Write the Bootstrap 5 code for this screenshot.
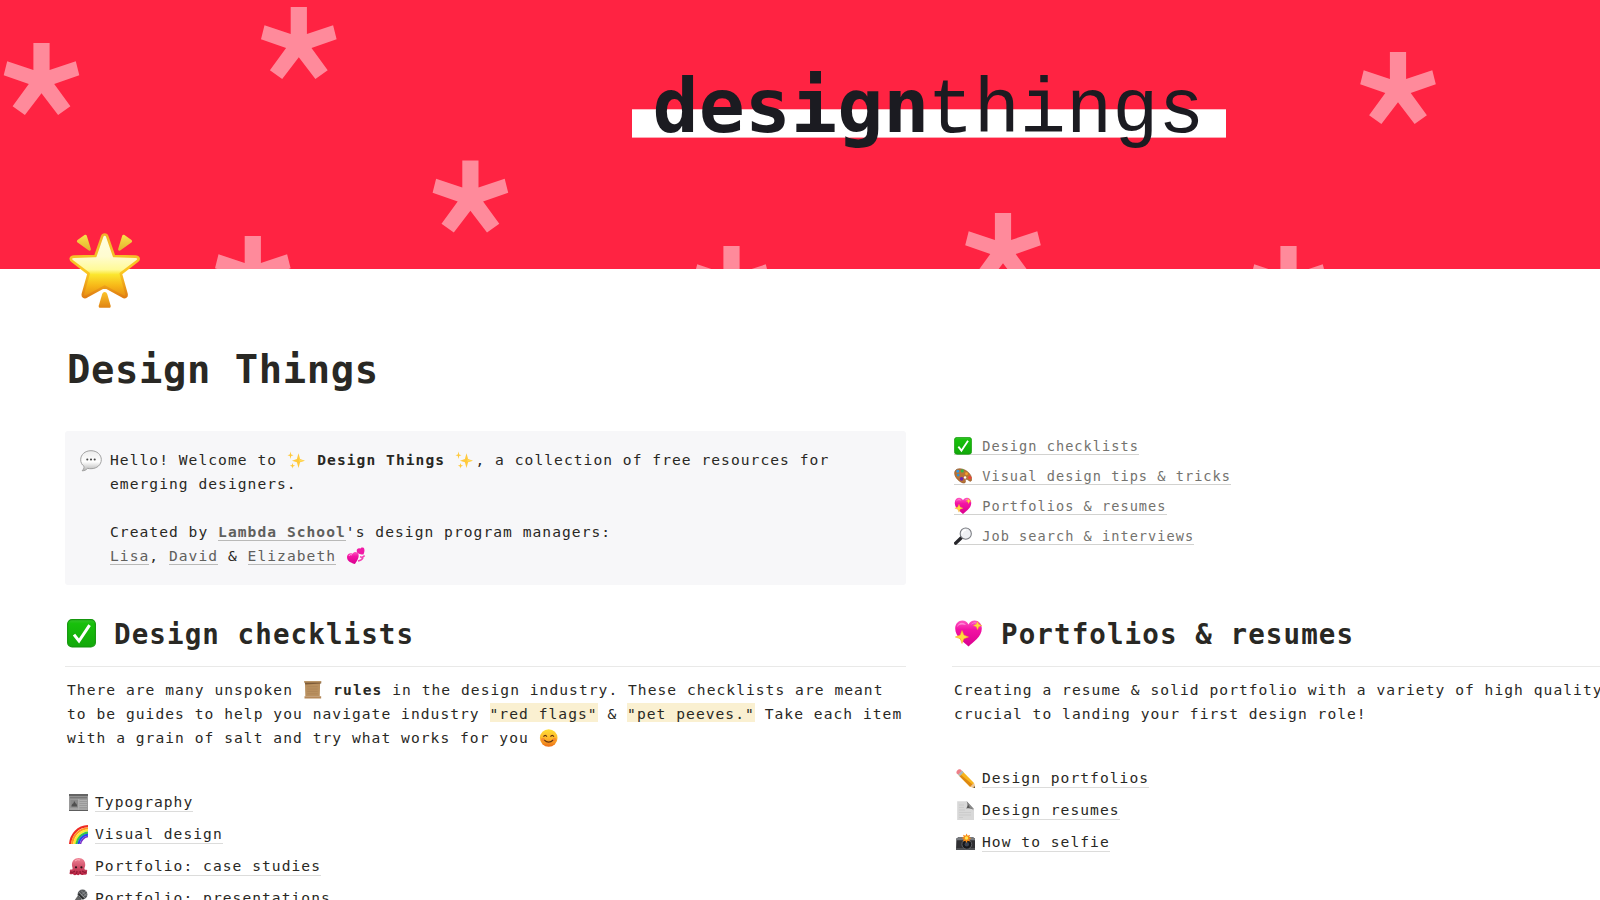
<!DOCTYPE html>
<html lang="en">
<head>
<meta charset="utf-8">
<meta name="viewport" content="width=device-width, initial-scale=1">
<title>Design Things</title>
<link href="https://cdn.jsdelivr.net/npm/bootstrap@5.3.0/dist/css/bootstrap.min.css" rel="stylesheet">
<style>
html,body{height:900px;overflow:hidden}
body{font-family:"DejaVu Sans Mono",monospace;font-size:14.6px;letter-spacing:1.04px;line-height:24px;color:#292824;background:#fff}
.cover{height:269px;background:#ff2342}
.page-icon{left:67px;top:229px}
.page-body{padding-left:65px;width:1793px}
h1{font-size:38.8px;line-height:46px;letter-spacing:.62px;margin:78px 0 38px 2px;font-weight:700}
.cols{gap:46px}
.pane{width:841px;flex:none}
.callout{background:#f7f7f9;border-radius:3px;padding:17px 16px 17px 15px;height:154px}
.callout .lead-icon{width:22px;height:22px;margin:2px 8px 0 0;flex:none}
.callout a{color:#60605d;text-decoration:none;border-bottom:1px solid #b9b9b8}
.toc a{color:#73726e;text-decoration:none;border-bottom:1px solid #d2d2d0}
.toc{font-size:13.6px;letter-spacing:1.03px;line-height:30px;padding-left:2px}
.toc .emo{width:18px;margin-right:1px}
.sect{margin-top:31px;padding:0 0 14px 2px;border-bottom:1px solid #e9e9e8}
h2{font-size:27.5px;line-height:36px;letter-spacing:1.1px;font-weight:700;margin:0}
h2 svg{width:29px;height:29px;margin:-2px 18px 0 0;flex:none}
.intro{margin:11px 0 36px 2px;white-space:nowrap}
.hl{background:#faf0d1;padding-top:2px}
.emo{width:20.6px;height:18px;vertical-align:-4px}
.pages{padding-left:4px}
.pages li{height:32px;line-height:32px}
.pages svg{width:19px;height:19px;margin-right:7px;flex:none}
.pages a{color:#292824;text-decoration:none;border-bottom:1px solid #dcdcdb;padding-bottom:1px}
</style>
</head>
<body>
<svg width="0" height="0" class="position-absolute" aria-hidden="true">
<defs>
<linearGradient id="gStar" x1="0" y1="0" x2="0" y2="1"><stop offset="0" stop-color="#fffde0"/><stop offset=".35" stop-color="#fffcd0"/><stop offset=".56" stop-color="#fffa98"/><stop offset=".64" stop-color="#fbe62e"/><stop offset=".82" stop-color="#f7b718"/><stop offset="1" stop-color="#e58a13"/></linearGradient>
<linearGradient id="gEdge" x1="0" y1="0" x2="0" y2="1"><stop offset="0" stop-color="#efb42a"/><stop offset=".6" stop-color="#fbc823"/><stop offset="1" stop-color="#e07d12"/></linearGradient>
<linearGradient id="gRay" x1="0" y1="0" x2="0" y2="1"><stop offset="0" stop-color="#fbe34a"/><stop offset="1" stop-color="#e2b22d"/></linearGradient>
<linearGradient id="gTail" x1="0" y1="0" x2="0" y2="1"><stop offset="0" stop-color="#fcc52a"/><stop offset="1" stop-color="#e08312"/></linearGradient>
<linearGradient id="gGreen" x1="0" y1="0" x2="0" y2="1"><stop offset="0" stop-color="#35c22a"/><stop offset=".15" stop-color="#18c00b"/><stop offset="1" stop-color="#12a80a"/></linearGradient>
<linearGradient id="gPink" x1="0" y1="0" x2="0" y2="1"><stop offset="0" stop-color="#ff55c0"/><stop offset=".35" stop-color="#f313a4"/><stop offset="1" stop-color="#d9008f"/></linearGradient>
<linearGradient id="gBubble" x1="0" y1="0" x2="0" y2="1"><stop offset="0" stop-color="#ececec"/><stop offset=".55" stop-color="#fff"/><stop offset="1" stop-color="#b4b4b4"/></linearGradient>
<linearGradient id="gFace" x1="0" y1="0" x2="0" y2="1"><stop offset="0" stop-color="#ffdf35"/><stop offset=".55" stop-color="#fdb52b"/><stop offset="1" stop-color="#ec6b14"/></linearGradient>
<linearGradient id="gOcto" x1="0" y1="0" x2="0" y2="1"><stop offset="0" stop-color="#ef8496"/><stop offset="1" stop-color="#b51f3f"/></linearGradient>
<symbol id="check" viewBox="0 0 29 29"><rect x=".6" y=".6" width="27.8" height="27.3" rx="4.5" fill="url(#gGreen)" stroke="#15960e" stroke-width="1.1"/><path d="M7 15.6 12 22 22.6 6.2" fill="none" stroke="#fff" stroke-width="3"/></symbol>
<symbol id="heart" viewBox="0 0 29 29"><path d="M14.5 27.5C10 23 1.2 18 1.2 9.5 1.2 4.5 4.5 1.4 8.3 1.4c2.8 0 5 1.5 6.2 4 1.2-2.500 3.400-4 6.200-4 3.800 0 7.100 3.100 7.100 8.100 0 8.500-8.800 13.500-13.300 18z" fill="url(#gPink)"/><path d="M3 8c1-4 6-6 9-2-4-1-7-1-9 2zM17 6c2-4 6-3 7-1-3-1-5-1-7 1z" fill="#ffa4df" opacity=".7"/><path d="m8 11.500 1.900 4.600 4.600 1.900-4.600 1.700L8 24.500l-1.800-4.800L1.300 18l4.900-1.900zM23.500 2.500l1.200 2.800 3 1.200-3 1.200-1.200 3-1.200-3-2.900-1.200 2.900-1.200z" fill="#ffdc3e" stroke="#f5a623" stroke-width=".5"/></symbol>
<symbol id="sparkles" viewBox="0 0 20.6 18"><path d="M11.500 2.200 13.100 8 18 9.700 13.100 11.300 11.500 17 9.900 11.300 5 9.700 9.900 8zM3.500.5l.7 3 2.300.8-2.300.8-.7 3-.7-3L.5 4.300l2.300-.8zM5.500 12l.6 2 2 .8-2 .7-.6 2-.6-2-2-.7 2-.8z" fill="#ffc93c"/><path d="m11.500 4 1 4.500L17 9.700l-4.500 1" fill="#ffdb5c"/></symbol>
<symbol id="bubble" viewBox="0 0 22 22"><path d="M11 .7C5 .7.7 4.600.7 9.700c0 3 1.200 5 3.300 6.600.3 1.900-.8 3.500-1.900 4.500 2.600 0 4.400-1 5.500-2.500 1 .3 2.200.4 3.400.4 6 0 10.300-4 10.300-9S17 .7 11 .7z" fill="url(#gBubble)" stroke="#a0a0a0" stroke-width="1"/><circle cx="7.300" cy="9.500" r="1.050" fill="#444"/><circle cx="11" cy="9.500" r="1.050" fill="#444"/><circle cx="14.700" cy="9.500" r="1.050" fill="#444"/></symbol>
<symbol id="hearts" viewBox="0 0 20.600 18"><path d="M9 17C6 16.200.8 14.500 1 10c.1-3 3-4.600 5.500-3.300C8 4.400 12 4.500 12.600 7.600 13.200 11.300 10.500 15 9 17z" fill="url(#gPink)"/><path d="M17.500 7.500C15 7.700 11 7 10.700 4c-.1-2.200 2-3.200 3.500-2.300C15 .2 17.800 0 18.300 2c.5 2-.2 4-.8 5.500z" fill="#f01aa6"/><path d="M14 9.800c1.600.6 3.600.2 4.600-1.300M12 14c2.500-.3 4.300-1.600 5-3.200" fill="none" stroke="#f63fb4" stroke-width="1.500"/><path d="M3 9c.6-1.500 2-1.600 3-1" stroke="#ffa4df" fill="none"/></symbol>
<symbol id="palette" viewBox="0 0 19 18"><path d="M1 4C3-.5 11 1 15.500 5.500c4 4 4 9.500 1.500 9-2-.5-2.500-2.500-4.500-2-1.500.5.500 2.700-1 3.700C8.500 18-1.500 10 1 4z" fill="#b87436" stroke="#8b4e1f" stroke-width=".6"/><circle cx="4" cy="4" r="1.500" fill="#2e9bea"/><circle cx="8.700" cy="3.700" r="1.700" fill="#35b64a"/><circle cx="4.400" cy="8" r="1.500" fill="#2a90d8"/><circle cx="8" cy="12" r="2" fill="#6b22b0"/><circle cx="13.200" cy="6.600" r="1.500" fill="#f5a22a"/><circle cx="16.600" cy="10.600" r="1.700" fill="#ee4438"/><circle cx="11.700" cy="10.600" r="1.300" fill="#fff"/></symbol>
<symbol id="lens" viewBox="0 0 19 18"><path d="m8 10.500-6.200 6" stroke="#26262b" stroke-width="3.600" stroke-linecap="round"/><circle cx="12.400" cy="6.500" r="5.900" fill="#eef0f3" stroke="#77797f" stroke-width="1.100"/><path d="M8.700 6.500a3.800 3.800 0 0 1 4-3.900" stroke="#fff" fill="none" stroke-width="1.500"/></symbol>
<symbol id="scroll" viewBox="0 0 20.600 19"><path d="M1.500 2h16l-.4 14H1.900z" fill="#b9905f"/><path d="M.6.300h18v2.400L2 3.600z" fill="#7d5b38"/><path d="M.6.300h18v1.200H.6z" fill="#c59c69"/><path d="M1 16.200h17.600v2.300H1z" fill="#b58858"/><path d="M4 6h11M4 8.500h11M4 11h11M4 13.500h11" stroke="#a67e50" stroke-width=".5"/></symbol>
<symbol id="smile" viewBox="0 0 20.600 18"><circle cx="9.700" cy="9" r="8.800" fill="url(#gFace)"/><path d="M4.500 7.700q1.700-2.500 3.400 0M11.500 7.700q1.700-2.500 3.400 0" fill="none" stroke="#643411" stroke-width="1.200"/><path d="M5.200 11q4.500 4.300 9 0" fill="none" stroke="#643411" stroke-width="1.200"/><circle cx="3.900" cy="10.500" r="1.800" fill="#f56a35" opacity=".5"/><circle cx="15.500" cy="10.500" r="1.800" fill="#f56a35" opacity=".5"/></symbol>
<symbol id="news" viewBox="0 0 19 19"><path d="M0 1h19v17H0z" fill="#999"/><path d="M0 1h19v2H0z" fill="#646464"/><path d="M1 3.800h17v1.600H1z" fill="#777"/><path d="M1.500 7h7.500v7.500H1.500z" fill="#8a8a8a"/><path d="M2.500 13.500c0-2 1-3 2.300-3.500-1-2 2-2 1.300 0 1.500.5 2 1.500 2 3.500z" fill="#505050"/><path d="M10.500 7.500H18M10.500 9.500H18M10.500 11.500H18M10.500 13.500H18M1 16h8M10.500 16H18" stroke="#b4b4b4" stroke-width=".8"/><path d="M9.800 6v11" stroke="#c8c8c8" stroke-width=".6"/><path d="M0 17.500h19" stroke="#5d5d5d"/></symbol>
<symbol id="rainbow" viewBox="0 0 19 19"><g fill="none" stroke-width="2.250"><path d="M1.100 19C2 9 9 1.500 19 1.200" stroke="#ee2b24"/><path d="M3.200 19C4 10.500 10.500 3.600 19 3.300" stroke="#ff9822"/><path d="M5.300 19C6 12 12 5.700 19 5.400" stroke="#ffe92e"/><path d="M7.400 19C8 13.500 13 7.800 19 7.500" stroke="#35c84a"/><path d="M9.500 19c.5-4.500 4.500-9 9.500-9.400" stroke="#2249ef"/><path d="M11.500 19c.5-3.500 3.500-7 7.500-7.400" stroke="#7930ca" stroke-width="1.500"/></g></symbol>
<symbol id="octopus" viewBox="0 0 19 19"><path d="M3 8.500C2.500 4 5.500 1 9.700 1s7 3 6.500 7.500c-.2 1.500-1 2.500-.7 3.500.4 1.300 1.800.3 2.500 1 1 1-1 2-.1 3.500.3 1-1.400 1.500-2.900 1-1.500 1-3.300.6-4-.4-.8 1.400-2.400 1.400-3.300.4-1.500 1-3 .8-4-.5-1.500.7-3.500.2-3.200-1 .8-1 .2-2.200.4-3 .6-1 2 .1 2.500-.8C4 11 3.200 10.500 3 8.500z" fill="url(#gOcto)"/><path d="M1 15q3 1 5-1M18 15q-3 1-5-1M7 17q1-1 1-3M12 17q-1-1-1-3" fill="none" stroke="#811029" stroke-width=".9"/><circle cx="7" cy="10.300" r="1.100" fill="#2b151b"/><circle cx="12.400" cy="10.300" r="1.100" fill="#2b151b"/><path d="M6 4q2-2 5-1" stroke="#ffb0ba" fill="none"/></symbol>
<symbol id="mic" viewBox="0 0 19 19"><path d="m10 5 4 4-9 8-3 2-1-1 2-3z" fill="#666"/><circle cx="13.500" cy="5.500" r="4.900" fill="#55585b"/><path d="m10 3 6 6M12 1.500l5.500 5.500M9.500 6l4.500 4.500M10 8l7-6M12 9.500l6-5" stroke="#a4a7aa" stroke-width=".6"/><path d="m9.500 5 5 5" stroke="#222" stroke-width="1.300"/></symbol>
<symbol id="pencil" viewBox="0 0 19 19"><path d="M2.200 5.700 6 1.700 18 14l1 5-5-1.300z" fill="#f8b51c"/><path d="m3.500 7.200 1.300-1.400L17 16l-1 2-2-.3z" fill="#de8811"/><path d="M14 17.700 18 14l1 5z" fill="#ecc596"/><path d="m17.300 18.500 1.300-1.300.4 1.800z" fill="#2d2824"/><path d="M.5 4.300C0 2 2 0 4.300.3L6 1.700 2.200 5.700z" fill="#ee7f88"/><path d="m2.200 5.700 3.800-4 1.700 1.600-3.900 4z" fill="#a9b5c0"/></symbol>
<symbol id="doc" viewBox="0 0 19 19"><path d="M1.200.300h9.500L18 8v11H1.200z" fill="#d8d8d8"/><path d="M10.700.300c1.700 3 .8 5.500-.5 7.200 3-.8 6-.3 7.800 2z" fill="#555"/><path d="M10.700.3 18 8l-4-.8z" fill="#888"/><path d="M3 4h5M3 6.500h5M3 9h6M3 11.500h12M3 14h12M3 16.500h4" stroke="#c4c4c4" stroke-width=".6"/></symbol>
<symbol id="camera" viewBox="0 0 19 19"><path d="M.4 5.500 3 4h13.500L19 5.500V17H0z" fill="#303033"/><path d="M.4 5.500 3 4h13.500L19 5.500v1.800H.2z" fill="#77797d"/><path d="M0 15h19v2H0z" fill="#505154"/><circle cx="10.800" cy="11.300" r="4.900" fill="#17181b" stroke="#66686c" stroke-width=".9"/><circle cx="10.800" cy="11.300" r="2.200" fill="#3c4351"/><path d="m10.500.500 1.200 2.300 2.500-1-1 2.500 2.200 1-2.200 1 .8 2.300-2.400-.8-1.200 2.200-1-2.300L7 8.400l.8-2.300-2.200-1 2.200-1L7 1.700l2.500 1z" fill="#f98a13"/><circle cx="10.500" cy="5" r="1.700" fill="#ffe650"/></symbol>
<path id="aster" d="M-8.100 0H8.100V27L34.300 18.300 37.800 32.300 12.700 41 28.900 63.300 16.600 72 0 50.300-16.600 72-28.900 63.300-12.700 41-37.800 32.300-34.300 18.300-8.100 27Z" fill="#fff" fill-opacity=".47"/>
</defs>
</svg>

<header class="position-relative">
<svg class="cover d-block" width="1600" height="269" viewBox="0 0 1600 269">
<use href="#aster" x="41.500" y="43"/><use href="#aster" x="298.800" y="7"/><use href="#aster" x="470.400" y="160.500"/><use href="#aster" x="252.800" y="236"/><use href="#aster" x="731.500" y="246"/><use href="#aster" x="1003" y="213"/><use href="#aster" x="1288.500" y="246"/><use href="#aster" x="1398" y="52"/>
<rect x="632" y="109.300" width="594" height="28.300" fill="#fff"/>
<g fill="#1b1b21" letter-spacing="0"><text x="652.500" y="132.300" font-size="75" font-weight="700" textLength="277" lengthAdjust="spacingAndGlyphs" font-family="DejaVu Sans Mono">design</text><text x="927.500" y="132.300" font-size="77" textLength="277" font-family="Liberation Mono">things</text></g>
</svg>
<svg class="page-icon position-absolute" width="76" height="80" viewBox="0 0 76 80">
<path d="M37.700 5.500c1.300 0 2.200.8 2.700 2.300l6.600 19.200 21.300.6c3.600.2 4.400 2.600 1.700 4.700L53.800 44.600l5.600 20c.8 3-1.400 4.500-3.800 2.800L37.700 57.600 19.800 67.400c-2.400 1.700-4.600.2-3.800-2.800l5.600-20L5.400 32.300c-2.700-2.100-1.900-4.500 1.700-4.700l21.300-.6L35 7.800c.5-1.500 1.400-2.300 2.700-2.300z" fill="url(#gStar)" stroke="url(#gEdge)" stroke-width="2.600" stroke-linejoin="round"/>
<path d="M10.500 11 17.500 6c1-.7 2-.3 2.300.8l4 13c.4 1.700-.8 2.300-2 1.600L10.600 13.500c-.9-.6-1-1.700-.1-2.500zM64.500 11 57.500 6c-1-.7-2-.3-2.300.8l-4 13c-.4 1.700.8 2.300 2 1.600L64.400 13.500c.9-.6 1-1.700.1-2.500z" fill="url(#gRay)"/>
<path d="M37.700 63c1.200 0 2 .7 2.500 2l3.400 11.500c.4 1.500-.2 2.300-1.600 2.300h-8.600c-1.400 0-2-.8-1.600-2.300L35.200 65c.5-1.300 1.300-2 2.500-2z" fill="url(#gTail)"/>
</svg>
</header>

<main class="page-body">
<h1>Design Things</h1>
<div class="cols d-flex align-items-start">
<div class="pane callout d-flex">
<svg class="lead-icon"><use href="#bubble"/></svg>
<div>Hello! Welcome to <svg class="emo"><use href="#sparkles"/></svg> <b>Design Things</b> <svg class="emo"><use href="#sparkles"/></svg>, a collection of free resources for<br>emerging designers.<br><br>Created by <a href="#"><b>Lambda School</b></a>'s design program managers:<br><a href="#">Lisa</a>, <a href="#">David</a> &amp; <a href="#">Elizabeth</a> <svg class="emo"><use href="#hearts"/></svg></div>
</div>
<nav class="pane toc">
<div><a href="#"><svg class="emo"><use href="#check" width="18" height="18"/></svg> Design checklists</a></div>
<div><a href="#"><svg class="emo"><use href="#palette" width="18" height="18"/></svg> Visual design tips &amp; tricks</a></div>
<div><a href="#"><svg class="emo"><use href="#heart" width="18" height="18"/></svg> Portfolios &amp; resumes</a></div>
<div><a href="#"><svg class="emo"><use href="#lens" width="18" height="18"/></svg> Job search &amp; interviews</a></div>
</nav>
</div>
<div class="cols d-flex align-items-start">
<section class="pane">
<div class="sect"><h2 class="d-flex align-items-center"><svg><use href="#check"/></svg>Design checklists</h2></div>
<p class="intro">There are many unspoken <svg class="emo"><use href="#scroll"/></svg> <b>rules</b> in the design industry. These checklists are meant<br>to be guides to help you navigate industry <span class="hl">"red flags"</span> &amp; <span class="hl">"pet peeves."</span> Take each item<br>with a grain of salt and try what works for you <svg class="emo"><use href="#smile"/></svg></p>
<ul class="pages list-unstyled mb-0">
<li class="d-flex align-items-center"><svg><use href="#news"/></svg><span><a href="#">Typography</a></span></li>
<li class="d-flex align-items-center"><svg><use href="#rainbow"/></svg><span><a href="#">Visual design</a></span></li>
<li class="d-flex align-items-center"><svg><use href="#octopus"/></svg><span><a href="#">Portfolio: case studies</a></span></li>
<li class="d-flex align-items-center"><svg><use href="#mic"/></svg><span><a href="#">Portfolio: presentations</a></span></li>
</ul>
</section>
<section class="pane">
<div class="sect"><h2 class="d-flex align-items-center"><svg><use href="#heart"/></svg>Portfolios &amp; resumes</h2></div>
<p class="intro">Creating a resume &amp; solid portfolio with a variety of high quality<br>crucial to landing your first design role!</p>
<ul class="pages list-unstyled mb-0">
<li class="d-flex align-items-center"><svg><use href="#pencil"/></svg><span><a href="#">Design portfolios</a></span></li>
<li class="d-flex align-items-center"><svg><use href="#doc"/></svg><span><a href="#">Design resumes</a></span></li>
<li class="d-flex align-items-center"><svg><use href="#camera"/></svg><span><a href="#">How to selfie</a></span></li>
</ul>
</section>
</div>
</main>
<script src="https://cdn.jsdelivr.net/npm/bootstrap@5.3.0/dist/js/bootstrap.bundle.min.js"></script>
</body>
</html>
